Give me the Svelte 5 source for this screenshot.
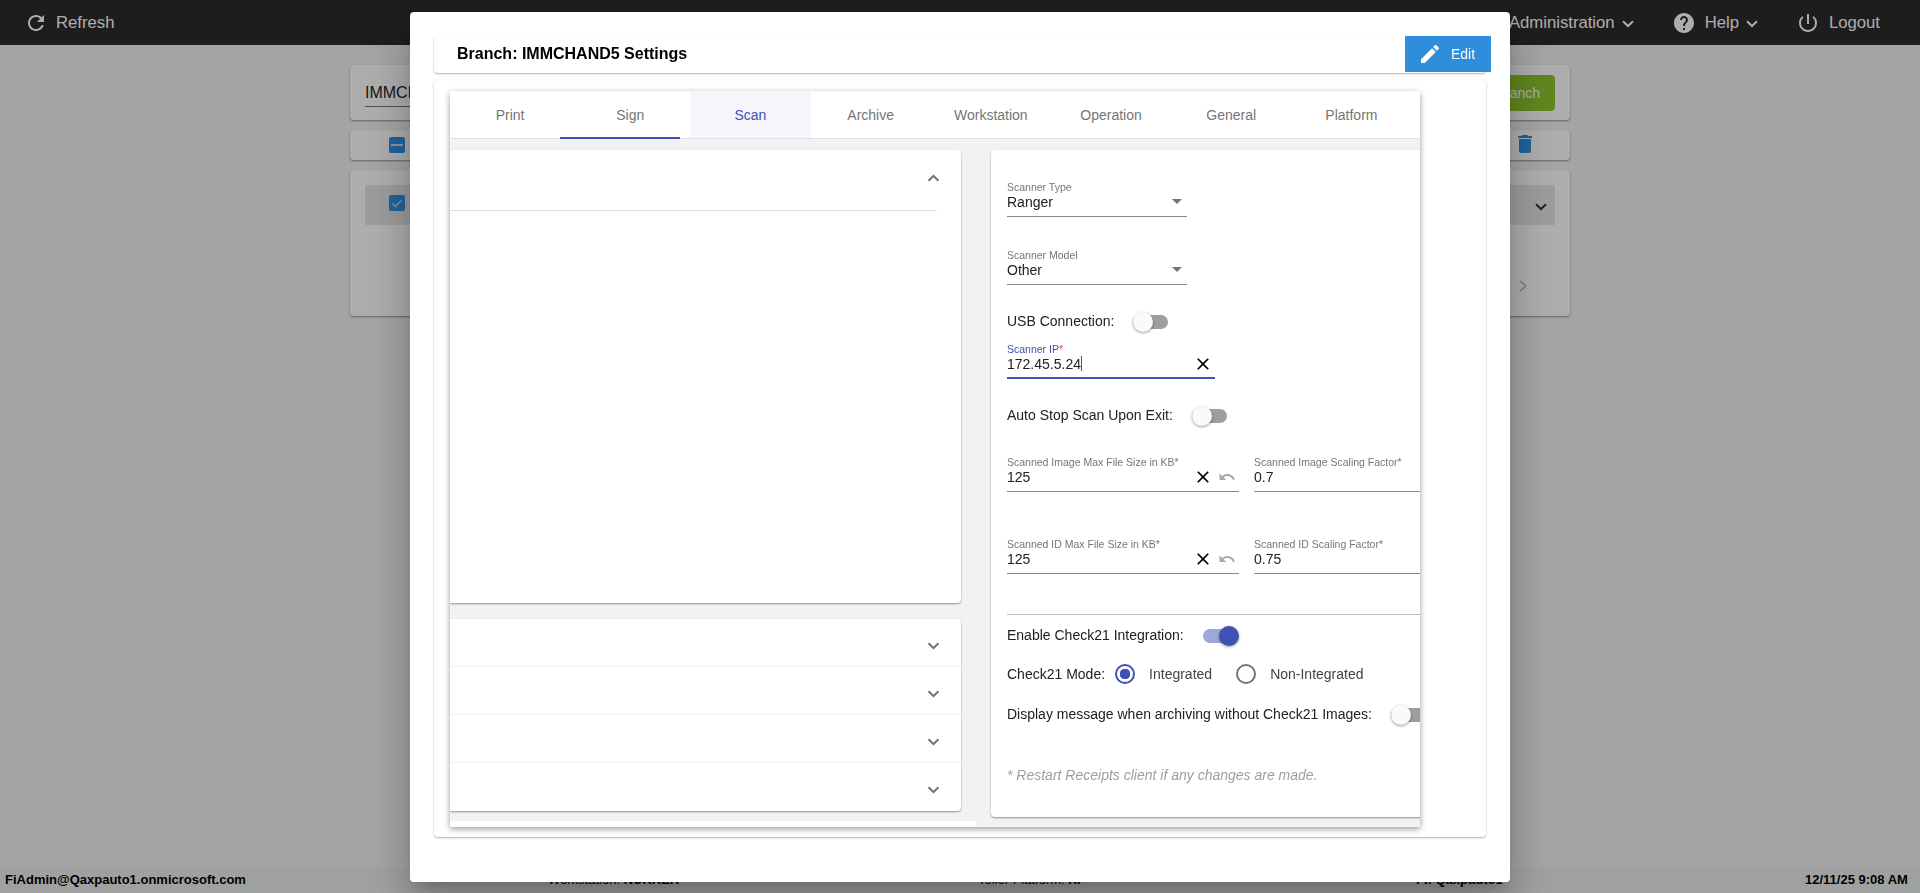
<script>
    const tabs = ["Print", "Sign", "Scan", "Archive", "Workstation", "Operation", "General", "Platform"];
    const activeTab = "Scan";
    const collapsedRows = [1, 2, 3, 4];
</script>

{#snippet chevron(cls)}
    <svg class={cls} viewBox="0 0 12 8"><path d="M1 1.2 6 6 11 1.2" fill="none" stroke="currentColor" stroke-width="2"/></svg>
{/snippet}

{#snippet clearIcon()}
    <svg class="clear" viewBox="0 0 24 24"><path d="M19 6.41L17.59 5 12 10.59 6.41 5 5 6.41 10.59 12 5 17.59 6.41 19 12 13.41 17.59 19 19 17.59 13.41 12z"/></svg>
{/snippet}

{#snippet undoIcon()}
    <svg class="undo" viewBox="0 0 24 24"><path d="M12.5 8c-2.65 0-5.05.99-6.9 2.6L2 7v9h9l-3.62-3.62c1.39-1.16 3.16-1.88 5.12-1.88 3.54 0 6.55 2.31 7.6 5.5l2.37-.78C21.08 11.03 17.15 8 12.5 8z"/></svg>
{/snippet}

{#snippet toggle(on)}
    <span class="toggle" class:on><span class="thumb"></span></span>
{/snippet}

{#snippet numberField(label, value)}
    <div class="field">
        <span class="label">{label}</span>
        <span class="value"><span class="valueText">{value}</span>{@render clearIcon()}{@render undoIcon()}</span>
    </div>
{/snippet}

<div class="page">
    <header class="topbar">
        <div class="navItem refresh">
            <svg class="navIcon" viewBox="0 0 24 24"><path d="M17.65 6.35C16.2 4.9 14.21 4 12 4c-4.42 0-7.99 3.58-7.99 8s3.57 8 7.99 8c3.73 0 6.84-2.55 7.73-6h-2.08c-.82 2.33-3.04 4-5.65 4-3.31 0-6-2.69-6-6s2.69-6 6-6c1.66 0 3.14.69 4.22 1.78L13 11h7V4l-2.35 2.35z"/></svg>
            <span>Refresh</span>
        </div>
        <div class="navRight">
            <div class="navItem admin"><span>Administration</span>{@render chevron("navChevron")}</div>
            <div class="navItem help">
                <svg class="navIcon" viewBox="0 0 24 24"><path d="M12 2C6.48 2 2 6.48 2 12s4.48 10 10 10 10-4.48 10-10S17.52 2 12 2zm1 17h-2v-2h2v2zm2.07-7.75l-.9.92C13.45 12.9 13 13.5 13 15h-2v-.5c0-1.1.45-2.1 1.17-2.83l1.24-1.26c.37-.36.59-.86.59-1.41 0-1.1-.9-2-2-2s-2 .9-2 2H8c0-2.21 1.79-4 4-4s4 1.79 4 4c0 .88-.36 1.68-.93 2.25z"/></svg>
                <span>Help</span>{@render chevron("navChevron")}
            </div>
            <div class="navItem logout">
                <svg class="navIcon" viewBox="0 0 24 24"><path d="M13 3h-2v10h2V3zm4.83 2.17l-1.42 1.42C17.99 7.86 19 9.81 19 12c0 3.87-3.13 7-7 7s-7-3.13-7-7c0-2.19 1.01-4.14 2.58-5.42L6.17 5.17C4.23 6.82 3 9.26 3 12c0 4.97 4.03 9 9 9s9-4.03 9-9c0-2.74-1.23-5.18-3.17-6.83z"/></svg>
                <span>Logout</span>
            </div>
        </div>
    </header>

    <main class="branches">
        <section class="bgCard searchCard">
            <span class="searchInput">IMMCHAND5</span>
            <span class="addBranch">Add Branch</span>
        </section>
        <section class="bgCard toolCard">
            <span class="check"><span class="minus"></span></span>
            <svg class="trash" viewBox="0 0 24 24"><path d="M6 19c0 1.1.9 2 2 2h8c1.1 0 2-.9 2-2V7H6v12zM19 4h-3.5l-1-1h-5l-1 1H5v2h14V4z"/></svg>
        </section>
        <section class="bgCard listCard">
            <div class="listRow">
                <span class="check">
                    <svg viewBox="0 0 16 16"><path d="M3.5 8.5 6.5 11.5 12.5 5" fill="none" stroke="#c9c9c9" stroke-width="1.6"/></svg>
                </span>
                {@render chevron("rowChevron")}
            </div>
            <div class="pager">
                <svg viewBox="0 0 8 12"><path d="M1 1 6.5 6 1 11" fill="none" stroke="currentColor" stroke-width="1.6"/></svg>
            </div>
        </section>
    </main>

    <footer class="status">
        <strong class="user">FiAdmin@Qaxpauto1.onmicrosoft.com</strong>
        <span class="workstation">Workstation: <strong>NUKKER</strong></span>
        <span class="platform">Teller Platform: <strong>XP</strong></span>
        <strong class="fi">FI: Qaxpauto1</strong>
        <strong class="time">12/11/25 9:08 AM</strong>
    </footer>
</div>

<div class="overlay">
    <div class="modal">
        <div class="titleCard">
            <h1>Branch: IMMCHAND5 Settings</h1>
            <button class="editBtn">
                <svg viewBox="0 0 24 24"><path d="M3 17.25V21h3.75L17.81 9.94l-3.75-3.75L3 17.25zM20.71 7.04c.39-.39.39-1.02 0-1.41l-2.34-2.34c-.39-.39-1.02-.39-1.41 0l-1.83 1.83 3.75 3.75 1.83-1.83z"/></svg>
                <span>Edit</span>
            </button>
        </div>

        <div class="contentCard">
            <div class="panel">
                <div class="tabs">
                    {#each tabs as tab}
                        <div class="tab" class:active={tab === activeTab}>{tab}</div>
                    {/each}
                    <span class="inkBar"></span>
                </div>

                <div class="body">
                    <div class="leftCol">
                        <div class="leftCard openCard">
                            <div class="openHead">{@render chevron("accChevron up")}</div>
                        </div>
                        <div class="leftCard rows">
                            {#each collapsedRows as row (row)}
                                <div class="accRow">{@render chevron("accChevron")}</div>
                            {/each}
                        </div>
                    </div>

                    <div class="rightCol">
                        <div class="formCard">
                            <div class="field select">
                                <span class="label">Scanner Type</span>
                                <span class="value"><span class="valueText">Ranger</span><span class="arrow"></span></span>
                            </div>
                            <div class="field select second">
                                <span class="label">Scanner Model</span>
                                <span class="value"><span class="valueText">Other</span><span class="arrow"></span></span>
                            </div>

                            <div class="switchRow usb"><span>USB Connection:</span>{@render toggle(false)}</div>

                            <div class="field focused">
                                <span class="label">Scanner IP<i>*</i></span>
                                <span class="value"><span class="valueText">172.45.5.24<span class="caret"></span></span>{@render clearIcon()}</span>
                            </div>

                            <div class="switchRow autoStop"><span>Auto Stop Scan Upon Exit:</span>{@render toggle(false)}</div>

                            <div class="pair first">
                                {@render numberField("Scanned Image Max File Size in KB*", "125")}
                                <div class="field"><span class="label">Scanned Image Scaling Factor*</span><span class="value">0.7</span></div>
                            </div>
                            <div class="pair">
                                {@render numberField("Scanned ID Max File Size in KB*", "125")}
                                <div class="field"><span class="label">Scanned ID Scaling Factor*</span><span class="value">0.75</span></div>
                            </div>

                            <hr>

                            <div class="switchRow enable"><span>Enable Check21 Integration:</span>{@render toggle(true)}</div>

                            <div class="modeRow">
                                <span>Check21 Mode:</span>
                                <span class="radio checked"></span><span class="radioLabel">Integrated</span>
                                <span class="radio"></span><span class="radioLabel">Non-Integrated</span>
                            </div>

                            <div class="switchRow display"><span>Display message when archiving without Check21 Images:</span>{@render toggle(false)}</div>

                            <p class="note">* Restart Receipts client if any changes are made.</p>
                        </div>
                    </div>
                </div>
            </div>
        </div>
    </div>
</div>

<style>
    :global(body){
        margin: 0;
        font-family: "Liberation Sans", Arial, sans-serif;
        overflow: hidden;
    }

    .page{
        display: flex;
        flex-direction: column;
        height: 893px;
        background: #f2f2f2;
    }

    /* top bar */
    .topbar{
        display: flex;
        justify-content: space-between;
        align-items: center;
        height: 45px;
        flex-shrink: 0;
        background: #2c2c2c;
        color: #fff;
        font-size: 16.7px;
    }

    .navItem{
        display: flex;
        align-items: center;
    }

    .navRight{
        display: flex;
        align-items: center;
    }

    .navIcon{
        width: 24px;
        height: 24px;
        fill: #fff;
    }

    .refresh{
        margin-left: 24px;
        gap: 8px;
    }

    .admin{
        gap: 7px;
        margin-right: 38px;
    }

    .help{
        gap: 7px;
        margin-right: 38px;
    }

    .help .navIcon{
        margin-right: 2px;
    }

    .logout{
        gap: 9px;
        margin-right: 40px;
    }

    .navChevron{
        width: 12px;
        height: 8px;
        margin-top: 2px;
    }

    /* page behind the dialog */
    .branches{
        flex: 1;
        display: flex;
        flex-direction: column;
        gap: 10px;
        width: 1220px;
        margin: 0 auto;
        padding-top: 20px;
    }

    .bgCard{
        background: #fff;
        border-radius: 4px;
        box-shadow: 0 1px 2px rgba(0, 0, 0, 0.4);
    }

    .searchCard{
        display: flex;
        justify-content: space-between;
        align-items: center;
        height: 55px;
        padding: 0 15px;
    }

    .searchInput{
        width: 300px;
        padding: 6px 0 4px;
        border-bottom: 1px solid #777;
        font-size: 16px;
        color: #222;
    }

    .addBranch{
        display: flex;
        align-items: center;
        justify-content: flex-end;
        width: 115px;
        height: 36px;
        padding-right: 15px;
        box-sizing: border-box;
        border-radius: 4px;
        background: #8dc62f;
        color: #fff;
        font-size: 14px;
    }

    .toolCard{
        display: flex;
        justify-content: space-between;
        align-items: center;
        height: 30px;
        padding: 0 33px 0 39px;
    }

    .check{
        display: flex;
        align-items: center;
        justify-content: center;
        width: 16px;
        height: 16px;
        border-radius: 2px;
        background: #2e93e6;
    }

    .check svg{
        width: 16px;
        height: 16px;
    }

    .minus{
        width: 12px;
        height: 2px;
        background: #ddd;
    }

    .trash{
        width: 24px;
        height: 24px;
        margin: -2px 0 0 0;
        fill: #2e93e6;
    }

    .listCard{
        height: 146px;
        padding: 15px;
        box-sizing: border-box;
    }

    .listRow{
        display: flex;
        justify-content: space-between;
        align-items: flex-start;
        height: 40px;
        padding: 10px 8px 0 24px;
        box-sizing: border-box;
        background: #e6e6e6;
    }

    .rowChevron{
        width: 12px;
        height: 8px;
        margin-top: 8px;
        color: #333;
    }

    .pager{
        display: flex;
        justify-content: flex-end;
        padding: 55px 28px 0 0;
        color: #bbb;
    }

    .pager svg{
        width: 8px;
        height: 12px;
    }

    .status{
        display: flex;
        align-items: center;
        height: 26px;
        padding-bottom: 2px;
        box-sizing: border-box;
        flex-shrink: 0;
        background: #ebeeee;
        color: #000;
        font-size: 13px;
    }

    .user{
        margin-left: 5px;
        width: 543px;
    }

    .workstation{
        width: 430px;
    }

    .platform{
        width: 438px;
    }

    .fi{
        width: 389px;
    }

    .time{
        white-space: nowrap;
    }

    /* dialog */
    .overlay{
        position: fixed;
        inset: 0;
        display: flex;
        justify-content: center;
        align-items: flex-start;
        padding-top: 12px;
        box-sizing: border-box;
        background: rgba(0, 0, 0, 0.32);
    }

    .modal{
        width: 1100px;
        height: 870px;
        padding: 24px;
        box-sizing: border-box;
        border-radius: 4px;
        background: #fff;
        box-shadow: 0 11px 15px -7px rgba(0, 0, 0, 0.2), 0 24px 38px 3px rgba(0, 0, 0, 0.14), 0 9px 46px 8px rgba(0, 0, 0, 0.12);
        color: #212121;
    }

    .titleCard{
        display: flex;
        justify-content: space-between;
        align-items: flex-start;
        height: 37px;
        border-radius: 4px;
        box-shadow: 0 1px 2px rgba(0, 0, 0, 0.3), 0 0 2px rgba(0, 0, 0, 0.04);
    }

    h1{
        margin: 0;
        padding: 9px 0 0 23px;
        font-size: 16px;
        line-height: 18px;
        font-weight: bold;
        color: #000;
    }

    .editBtn{
        display: flex;
        align-items: center;
        gap: 9px;
        width: 86px;
        height: 36px;
        margin-right: -5px;
        padding: 0 0 0 13px;
        border: none;
        background: #2f8edb;
        color: #fff;
        font-family: "Liberation Sans", Arial, sans-serif;
        font-size: 14px;
    }

    .editBtn svg{
        width: 24px;
        height: 24px;
        fill: #fff;
    }

    .contentCard{
        height: 757px;
        margin-top: 7px;
        padding: 11px 0 0 16px;
        box-sizing: border-box;
        border-radius: 4px;
        box-shadow: 0 1px 2px rgba(0, 0, 0, 0.3), 0 0 2px rgba(0, 0, 0, 0.04);
    }

    .panel{
        width: 970px;
        height: 736px;
        overflow: hidden;
        box-shadow: 0 2px 6px rgba(0, 0, 0, 0.4);
        border-radius: 2px 2px 0 0;
    }

    .tabs{
        position: relative;
        display: flex;
        height: 48px;
        box-sizing: border-box;
        border-bottom: 1px solid #e0e0e0;
        background: #fff;
    }

    .tab{
        display: flex;
        align-items: center;
        justify-content: center;
        width: 120.2px;
        flex-shrink: 0;
        font-size: 14px;
        color: #757575;
    }

    .tab.active{
        background: #f5f5fb;
        color: #3f51b5;
    }

    .inkBar{
        position: absolute;
        left: 110px;
        bottom: -1px;
        width: 120px;
        height: 2px;
        background: #3f51b5;
    }

    .body{
        display: flex;
        height: 688px;
        background: #fff;
    }

    .leftCol{
        width: 526px;
        height: 682px;
        padding-top: 11px;
        box-sizing: border-box;
        background: #f2f2f2;
    }

    .leftCard{
        width: 511px;
        background: #fff;
        border-radius: 0 4px 4px 0;
        box-shadow: 0 1px 2px rgba(0, 0, 0, 0.4);
    }

    .openCard{
        height: 453px;
    }

    .openHead{
        display: flex;
        justify-content: flex-end;
        height: 61px;
        width: 487px;
        box-sizing: border-box;
        border-bottom: 1px solid #e0e0e0;
    }

    .rows{
        margin-top: 16px;
    }

    .accRow{
        display: flex;
        justify-content: flex-end;
        height: 48px;
        box-sizing: border-box;
        border-bottom: 1px solid #f2f2f2;
    }

    .accRow:last-child{
        border-bottom: none;
    }

    .accChevron{
        width: 13px;
        height: 8px;
        margin: 23px 21px 0 0;
        color: #757575;
    }

    .openHead .accChevron{
        margin: 24px -3px 0 0;
        transform: rotate(180deg);
    }

    .rightCol{
        flex: 1;
        padding: 11px 0 10px 15px;
        min-width: 0;
        overflow: hidden;
        background: #f2f2f2;
    }

    .formCard{
        width: 460px;
        height: 667px;
        padding: 31px 0 0 16px;
        box-sizing: border-box;
        border-radius: 4px;
        background: #fff;
        box-shadow: 0 1px 2px rgba(0, 0, 0, 0.4);
        overflow: hidden;
        font-size: 14px;
    }

    /* form fields */
    .field{
        display: flex;
        flex-direction: column;
        width: 232px;
        height: 36px;
        box-sizing: border-box;
        border-bottom: 1px solid #8a8a8a;
    }

    .select{
        width: 180px;
    }

    .second{
        margin-top: 32px;
    }

    .label{
        height: 12px;
        font-size: 10.5px;
        line-height: 12px;
        color: #757575;
    }

    .value{
        display: flex;
        align-items: center;
        height: 18px;
        font-size: 14px;
        line-height: 18px;
        color: #212121;
    }

    .valueText{
        flex: 1;
    }

    .arrow{
        width: 0;
        height: 0;
        margin: 0 5px 2px 0;
        border-left: 5px solid transparent;
        border-right: 5px solid transparent;
        border-top: 5px solid #757575;
    }

    .clear{
        width: 20px;
        height: 20px;
        fill: #000;
        flex-shrink: 0;
    }

    .undo{
        width: 18px;
        height: 18px;
        margin: 0 3px 0 5px;
        fill: #a8a8a8;
        flex-shrink: 0;
    }

    .focused{
        width: 208px;
        margin-top: 12px;
        border-bottom: 2px solid #3f51b5;
    }

    .focused .label{
        color: #3f51b5;
    }

    .focused .label i{
        font-style: normal;
        color: #f44336;
    }

    .focused .clear{
        margin-right: 2px;
    }

    .caret{
        display: inline-block;
        width: 1px;
        height: 15px;
        vertical-align: -2px;
        background: #3f51b5;
    }

    .switchRow{
        display: flex;
        align-items: center;
        gap: 19px;
        height: 20px;
        color: #212121;
        white-space: nowrap;
    }

    .usb{
        margin-top: 26px;
    }

    .autoStop{
        margin-top: 26px;
    }

    .enable{
        margin-top: 10px;
    }

    .display{
        margin-top: 20px;
    }

    .toggle{
        position: relative;
        display: inline-block;
        width: 35px;
        height: 14px;
        margin-top: 2px;
        flex-shrink: 0;
        border-radius: 7px;
        background: #9e9e9e;
    }

    .thumb{
        position: absolute;
        left: 0;
        top: -3px;
        width: 20px;
        height: 20px;
        border-radius: 50%;
        background: #fafafa;
        box-shadow: 0 1px 3px rgba(0, 0, 0, 0.4);
    }

    .toggle.on{
        background: #9fa8da;
    }

    .toggle.on .thumb{
        left: 16px;
        background: #3f51b5;
    }

    .pair{
        display: grid;
        grid-template-columns: 232px 232px;
        column-gap: 15px;
        margin-top: 46px;
    }

    .pair.first{
        margin-top: 31px;
    }

    hr{
        height: 1px;
        margin: 40px 0 0;
        border: none;
        background: #bdbdbd;
    }

    .modeRow{
        display: flex;
        align-items: center;
        height: 20px;
        margin-top: 19px;
    }

    .radio{
        width: 20px;
        height: 20px;
        margin-left: 10px;
        box-sizing: border-box;
        border: 2px solid #757575;
        border-radius: 50%;
        background: #fff;
    }

    .radio.checked{
        border-color: #3f51b5;
        background: radial-gradient(circle, #3f51b5 0 5px, #fff 5.5px);
    }

    .radioLabel{
        margin-left: 14px;
        color: #424242;
    }

    .radioLabel + .radio{
        margin-left: 24px;
    }

    .note{
        margin: 41px 0 0;
        font-size: 14px;
        line-height: 20px;
        font-style: italic;
        color: #9e9e9e;
    }
</style>
